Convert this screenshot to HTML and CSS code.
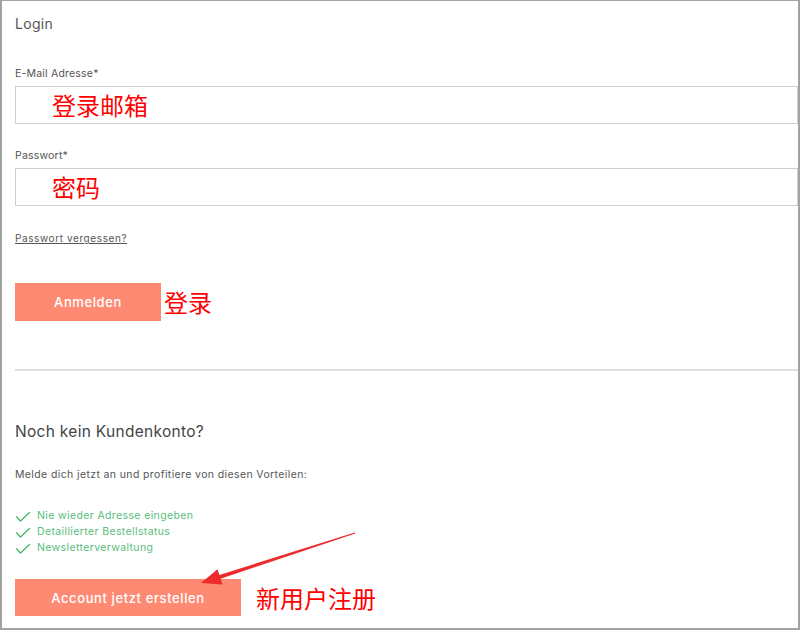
FILE: index.html
```html
<!DOCTYPE html>
<html lang="de">
<head>
    <meta charset="UTF-8">
    <meta name="viewport" content="width=device-width, initial-scale=1.0">
    <title>Login</title>
    <link rel="stylesheet" href="styles.css">
</head>
<body>
    <div class="frame">
        <!-- Login -->
        <div class="login">
            <h2 class="title">Login</h2>

            <label class="label">E-Mail Adresse*</label>
            <div class="field"><span class="note">登录邮箱</span></div>

            <label class="label label-second">Passwort*</label>
            <div class="field"><span class="note">密码</span></div>

            <a class="forgot" href="#">Passwort vergessen?</a>

            <div class="action-row">
                <button class="btn btn-login">Anmelden</button>
                <span class="note note-side">登录</span>
            </div>
        </div>

        <hr class="divider">

        <!-- Registrierung -->
        <div class="register">
            <h3 class="heading">Noch kein Kundenkonto?</h3>
            <p class="intro">Melde dich jetzt an und profitiere von diesen Vorteilen:</p>

            <ul class="benefits">
                <li>
                    <svg class="check" width="16" height="11" viewBox="0 0 16 11"><path d="M1 5.5 L5.5 10 L15 1" fill="none" stroke="#4cb86a" stroke-width="1.3"/></svg>
                    Nie wieder Adresse eingeben
                </li>
                <li>
                    <svg class="check" width="16" height="11" viewBox="0 0 16 11"><path d="M1 5.5 L5.5 10 L15 1" fill="none" stroke="#4cb86a" stroke-width="1.3"/></svg>
                    Detaillierter Bestellstatus
                </li>
                <li>
                    <svg class="check" width="16" height="11" viewBox="0 0 16 11"><path d="M1 5.5 L5.5 10 L15 1" fill="none" stroke="#4cb86a" stroke-width="1.3"/></svg>
                    Newsletterverwaltung
                </li>
            </ul>

            <div class="action-row">
                <button class="btn btn-create">Account jetzt erstellen</button>
                <span class="note note-create">新用户注册</span>
            </div>
        </div>

        <!-- Pfeil -->
        <svg class="arrow" width="800" height="630" viewBox="0 0 800 630">
            <polygon points="201,583 217.5,569.2 219.4,574.9 354.8,532.5 355.2,533.5 220.6,578.7 222.5,584.4" fill="#ee2a2a"/>
        </svg>
    </div>
</body>
</html>
```

FILE: styles.css
```css
* {
    box-sizing: border-box;
}
body {
    margin: 0;
    font-family: Inter, "Noto Sans", sans-serif;
    color: #555;
    background: #fff;
}
.frame {
    position: relative;
    width: 800px;
    height: 630px;
    border: 2px solid #a3a3a3;
    border-top-width: 1px;
    padding-left: 13px;
    overflow: hidden;
}
.note {
    font-family: "Noto Sans CJK SC", sans-serif;
    color: #ff0000;
    font-size: 24px;
    line-height: 1;
    letter-spacing: 0;
}
.title {
    margin: 13px 0 0;
    font-size: 14px;
    font-weight: 400;
    line-height: 20px;
    color: #555;
    letter-spacing: 0.3px;
}
.label {
    display: block;
    margin-top: 33px;
    font-size: 10.5px;
    line-height: 14px;
    color: #555;
    letter-spacing: 0.2px;
}
.label-second {
    margin-top: 25px;
}
.field {
    margin-top: 5px;
    height: 38px;
    border: 1px solid #cfcfcf;
    display: flex;
    align-items: center;
    padding-left: 36px;
}
.forgot {
    display: inline-block;
    margin-top: 25px;
    font-size: 10px;
    line-height: 14px;
    color: #555;
    letter-spacing: 0.6px;
}
.action-row {
    display: flex;
    align-items: center;
    gap: 3px;
}
.login .action-row {
    margin-top: 37px;
}
.btn {
    border: none;
    background: #ff8a74;
    color: #fff;
    font-family: inherit;
    font-size: 13px;
    font-weight: 500;
    letter-spacing: 0.6px;
    height: 38px;
    padding: 0;
    cursor: pointer;
}
.btn-login {
    width: 146px;
}
.btn-create {
    width: 226px;
    height: 37px;
}
.note-create {
    margin-left: 12px;
}
.divider {
    margin: 48px 0 0;
    border: none;
    border-top: 2px solid #e0e0e0;
}
.heading {
    margin: 51px 0 0;
    font-size: 15.5px;
    font-weight: 400;
    line-height: 20px;
    color: #444;
    letter-spacing: 0.3px;
}
.intro {
    margin: 26px 0 0;
    font-size: 10.5px;
    line-height: 14px;
    letter-spacing: 0.38px;
}
.benefits {
    list-style: none;
    margin: 26px 0 0;
    padding: 0;
    color: #5bbd7c;
    font-size: 10.5px;
    line-height: 16px;
    letter-spacing: 0.38px;
}
.benefits li {
    display: flex;
    align-items: center;
    gap: 6px;
}
.register .action-row {
    margin-top: 23px;
}
.arrow {
    position: absolute;
    left: -2px;
    top: -1px;
    pointer-events: none;
}
```
